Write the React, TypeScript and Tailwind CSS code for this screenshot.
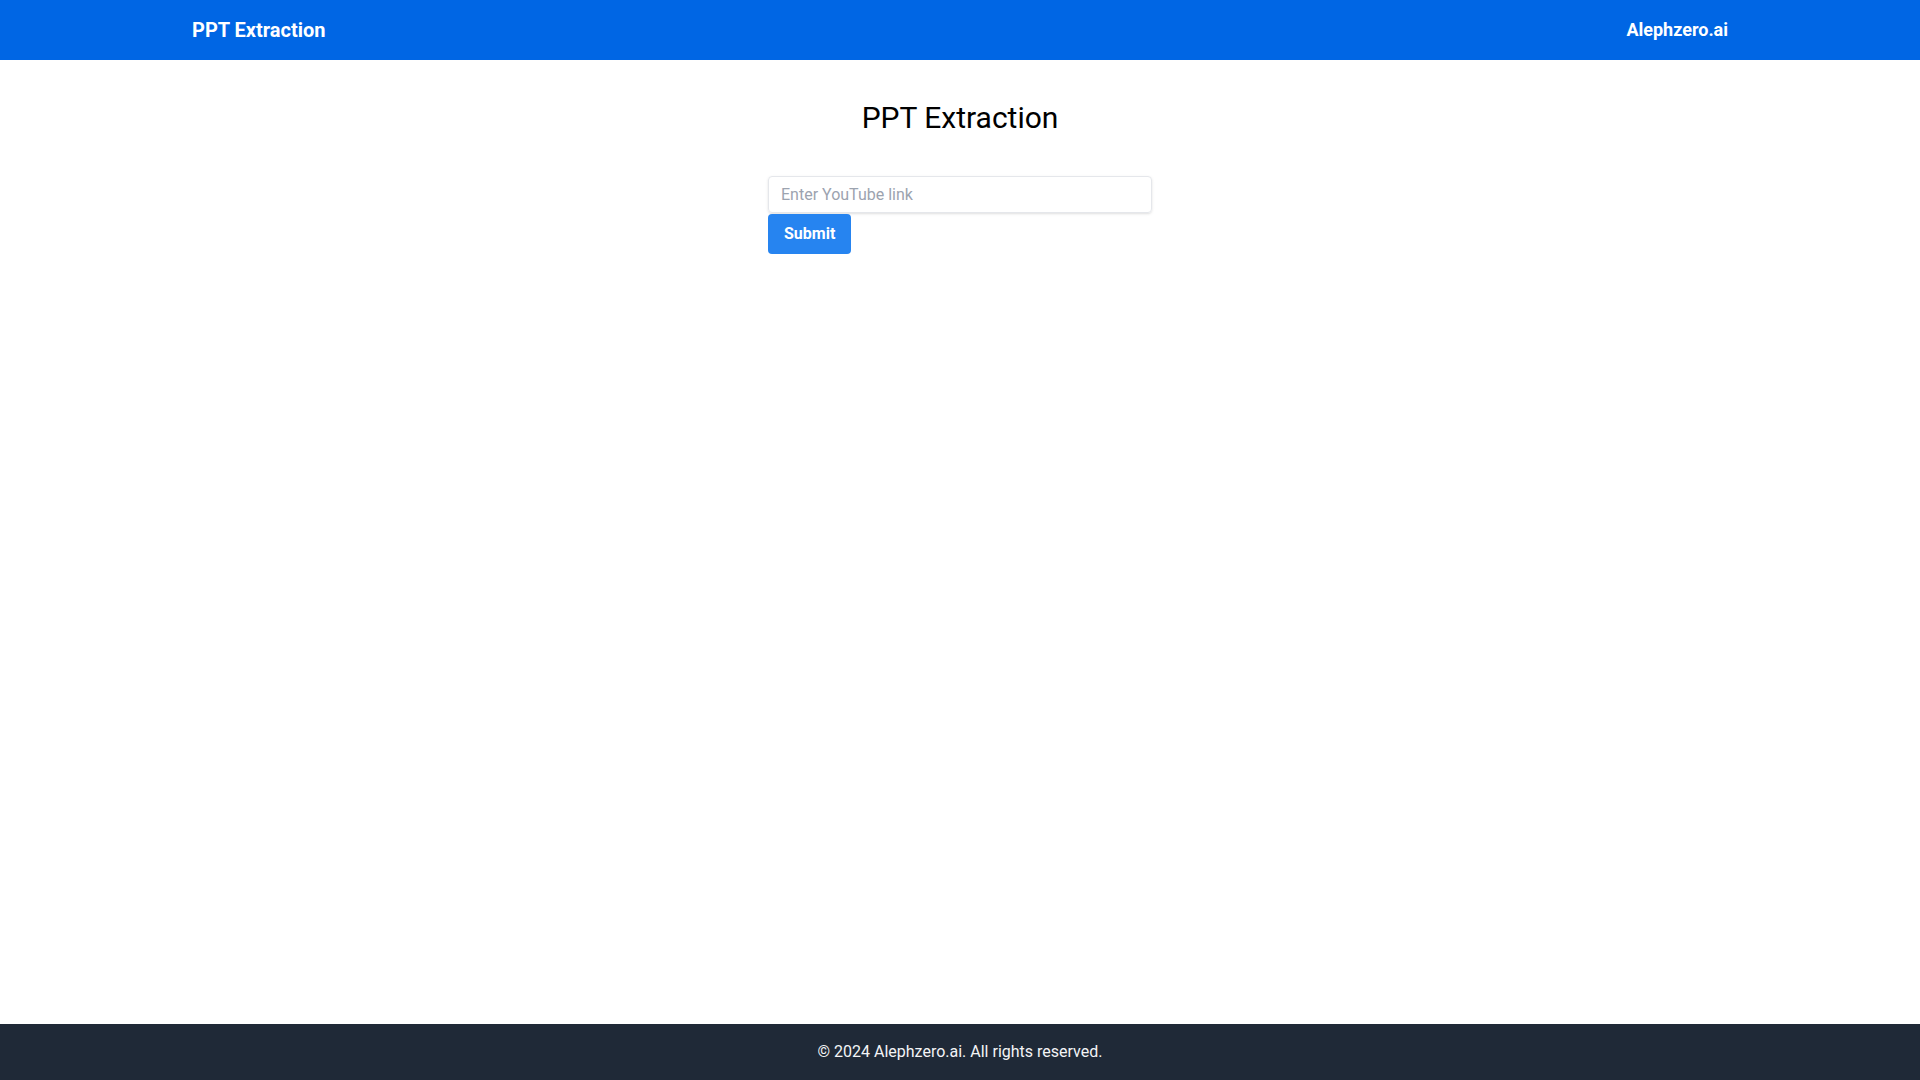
import {useState} from "react";

function App() {

    const [link, setLink] = useState<string>("");

    const onSubmit = (e: React.FormEvent) => {
        e.preventDefault();
        // console.log("--link--", link);
    }

    return (
        <div className="min-h-screen flex flex-col bg-white font-['Roboto',sans-serif]">
            <header className="bg-[#0066e4] text-white h-[60px]">
                <div className="max-w-[1536px] mx-auto h-full flex items-center justify-between">
                    <span className="text-xl font-bold">PPT Extraction</span>
                    <span className="text-lg font-bold">Alephzero.ai</span>
                </div>
            </header>

            <main className="flex-1 flex flex-col items-center pt-10">
                <h1 className="text-3xl text-black mb-10">PPT Extraction</h1>
                <form onSubmit={onSubmit} className="w-96 flex flex-col items-start">
                    <input
                        type="text"
                        value={link}
                        onChange={(e) => setLink(e.target.value)}
                        placeholder="Enter YouTube link"
                        className="w-full h-[37px] px-3 text-base text-gray-800 placeholder:text-[#9ca3af] border border-gray-200 rounded shadow-sm outline-none"
                    />
                    <button type="submit"
                            className="mt-px h-10 px-4 bg-[#2684f0] text-white font-bold rounded">
                        Submit
                    </button>
                </form>
            </main>

            <footer className="bg-[#1f2937] text-gray-100 text-center py-4">
                © 2024 Alephzero.ai. All rights reserved.
            </footer>
        </div>
    )
}

export default App
